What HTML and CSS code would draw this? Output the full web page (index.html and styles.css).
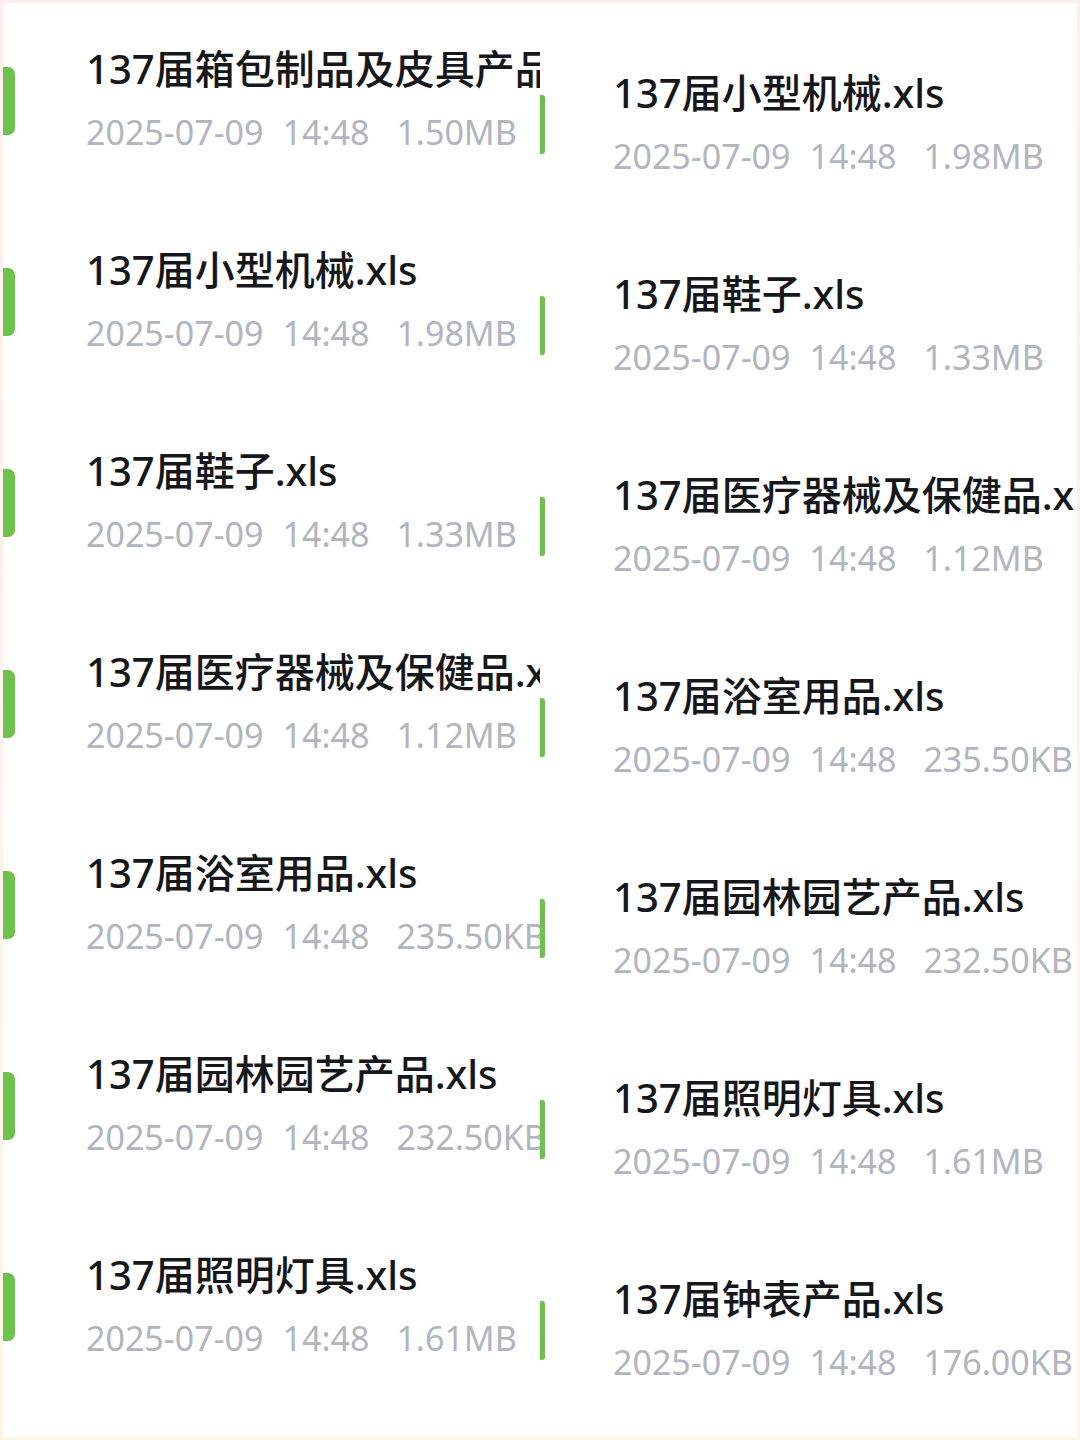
FILE: index.html
```html
<!DOCTYPE html>
<html lang="zh-CN">
<head>
<meta charset="utf-8">
<title>137届文件列表</title>
<link rel="stylesheet" href="styles.css">
</head>
<body>
<div class="frame">
  <div class="sheet">
    <section class="panel panel-left">
      <div class="item"><span class="bar"></span><div class="info"><div class="name">137届箱包制品及皮具产品.xls</div><div class="meta"><span class="date">2025-07-09</span><span class="time">14:48</span><span class="size">1.50MB</span></div></div></div>
      <div class="item"><span class="bar"></span><div class="info"><div class="name">137届小型机械.xls</div><div class="meta"><span class="date">2025-07-09</span><span class="time">14:48</span><span class="size">1.98MB</span></div></div></div>
      <div class="item"><span class="bar"></span><div class="info"><div class="name">137届鞋子.xls</div><div class="meta"><span class="date">2025-07-09</span><span class="time">14:48</span><span class="size">1.33MB</span></div></div></div>
      <div class="item"><span class="bar"></span><div class="info"><div class="name">137届医疗器械及保健品.xls</div><div class="meta"><span class="date">2025-07-09</span><span class="time">14:48</span><span class="size">1.12MB</span></div></div></div>
      <div class="item"><span class="bar"></span><div class="info"><div class="name">137届浴室用品.xls</div><div class="meta"><span class="date">2025-07-09</span><span class="time">14:48</span><span class="size">235.50KB</span></div></div></div>
      <div class="item"><span class="bar"></span><div class="info"><div class="name">137届园林园艺产品.xls</div><div class="meta"><span class="date">2025-07-09</span><span class="time">14:48</span><span class="size">232.50KB</span></div></div></div>
      <div class="item"><span class="bar"></span><div class="info"><div class="name">137届照明灯具.xls</div><div class="meta"><span class="date">2025-07-09</span><span class="time">14:48</span><span class="size">1.61MB</span></div></div></div>
    </section>
    <section class="panel panel-right">
      <div class="item"><span class="bar"></span><div class="info"><div class="name">137届小型机械.xls</div><div class="meta"><span class="date">2025-07-09</span><span class="time">14:48</span><span class="size">1.98MB</span></div></div></div>
      <div class="item"><span class="bar"></span><div class="info"><div class="name">137届鞋子.xls</div><div class="meta"><span class="date">2025-07-09</span><span class="time">14:48</span><span class="size">1.33MB</span></div></div></div>
      <div class="item"><span class="bar"></span><div class="info"><div class="name">137届医疗器械及保健品.xls</div><div class="meta"><span class="date">2025-07-09</span><span class="time">14:48</span><span class="size">1.12MB</span></div></div></div>
      <div class="item"><span class="bar"></span><div class="info"><div class="name">137届浴室用品.xls</div><div class="meta"><span class="date">2025-07-09</span><span class="time">14:48</span><span class="size">235.50KB</span></div></div></div>
      <div class="item"><span class="bar"></span><div class="info"><div class="name">137届园林园艺产品.xls</div><div class="meta"><span class="date">2025-07-09</span><span class="time">14:48</span><span class="size">232.50KB</span></div></div></div>
      <div class="item"><span class="bar"></span><div class="info"><div class="name">137届照明灯具.xls</div><div class="meta"><span class="date">2025-07-09</span><span class="time">14:48</span><span class="size">1.61MB</span></div></div></div>
      <div class="item"><span class="bar"></span><div class="info"><div class="name">137届钟表产品.xls</div><div class="meta"><span class="date">2025-07-09</span><span class="time">14:48</span><span class="size">176.00KB</span></div></div></div>
    </section>
  </div>
</div>
</body>
</html>
```

FILE: styles.css
```css
* { box-sizing: border-box; }

html, body {
  margin: 0;
  padding: 0;
  width: 1080px;
  height: 1440px;
  overflow: hidden;
  background: #ffffff;
}

.frame {
  width: 1080px;
  height: 1440px;
  padding: 3px;
  background: linear-gradient(180deg, #fdf0ec 0%, #fdf3ea 50%, #fdf6e6 100%);
}

.sheet {
  width: 1074px;
  height: 1434px;
  background: #ffffff;
  display: grid;
  grid-template-columns: 537px 537px;
  overflow: hidden;
}

.panel {
  overflow: hidden;
  display: flex;
  flex-direction: column;
  font-family: "Noto Sans", "Noto Sans CJK SC", sans-serif;
}

.panel-left { margin-top: -3px; }
.panel-right { margin-top: 21px; }

.item {
  height: 201px;
  flex: 0 0 201px;
  display: flex;
  align-items: center;
}

.info {
  display: flex;
  flex-direction: column;
  white-space: nowrap;
}

.bar {
  flex: 0 0 auto;
  background: #6ec14c;
}

.panel-left .bar {
  width: 12px;
  height: 68px;
  border-radius: 0 7px 7px 0;
  margin-right: 71px;
}

.panel-right .bar {
  width: 5px;
  height: 59px;
  border-radius: 0 3px 3px 0;
  margin-right: 68px;
}

.name {
  font-size: 40px;
  font-weight: 500;
  line-height: 52px;
  color: #15171b;
}

.meta {
  margin-top: 11px;
  font-size: 34px;
  font-weight: 400;
  line-height: 52px;
  color: #b0b5bf;
  display: flex;
}

.date { margin-right: 19px; }
.time { margin-right: 27px; }
```
